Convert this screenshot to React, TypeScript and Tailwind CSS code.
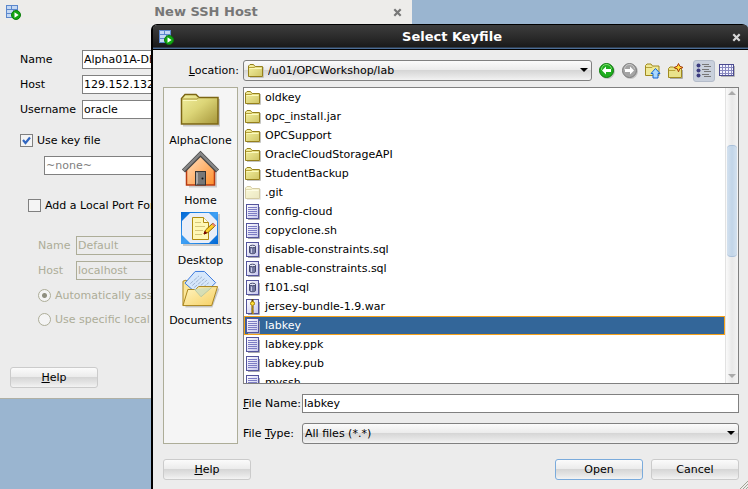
import { useId, type ReactNode } from "react";

type FileKind = "folder" | "hidden" | "doc" | "sql" | "zip";

const files: { name: string; kind: FileKind }[] = [
  { name: "oldkey", kind: "folder" },
  { name: "opc_install.jar", kind: "folder" },
  { name: "OPCSupport", kind: "folder" },
  { name: "OracleCloudStorageAPI", kind: "folder" },
  { name: "StudentBackup", kind: "folder" },
  { name: ".git", kind: "hidden" },
  { name: "config-cloud", kind: "doc" },
  { name: "copyclone.sh", kind: "doc" },
  { name: "disable-constraints.sql", kind: "sql" },
  { name: "enable-constraints.sql", kind: "sql" },
  { name: "f101.sql", kind: "sql" },
  { name: "jersey-bundle-1.9.war", kind: "zip" },
  { name: "labkey", kind: "doc" },
  { name: "labkey.ppk", kind: "doc" },
  { name: "labkey.pub", kind: "doc" },
  { name: "myssh", kind: "doc" },
];

function AppIcon() {
  return (
    <svg width="15" height="15" viewBox="0 0 15 15" className="shrink-0" aria-hidden="true">
      <rect x="0" y="0" width="12" height="13" fill="#5b87cc" />
      <path d="M1 1h4v3H1zM6 1h5v3H6zM1 5h6v3H1zM8 5h3v3H8zM1 9h10v3H1z" fill="#c4d8f3" />
      <circle cx="10" cy="10" r="4.5" fill="#12a512" stroke="#0a7d0a" strokeWidth="1" />
      <path d="M8.5 7.3v5.4L12.6 10z" fill="#fff" />
    </svg>
  );
}

function CloseIcon() {
  return (
    <svg width="9" height="9" viewBox="0 0 9 9" aria-hidden="true">
      <path d="M1.3 1.3l6.4 6.4M7.7 1.3L1.3 7.7" stroke="currentColor" strokeWidth="2.2" />
    </svg>
  );
}

function FolderIcon({ faded = false }: { faded?: boolean }) {
  const id = useId();
  return (
    <svg width="16" height="16" viewBox="0 0 16 16" className="shrink-0" opacity={faded ? 0.4 : 1} aria-hidden="true">
      <linearGradient id={id} x1="0" y1="0" x2="1" y2="1">
        <stop offset="0" stopColor="#f6f3a4" />
        <stop offset="1" stopColor="#cfc565" />
      </linearGradient>
      <path d="M2 14.500h13.500V4" fill="none" stroke="#c4c4c0" />
      <path d="M.5 13.500V3L2 1.500h3.500L7 3.500h7.500v10z" fill={`url(#${id})`} stroke="#96801c" />
      <path d="M1 4.500h5.500l1-1" fill="none" stroke="#b7a23a" />
      <path d="M1.500 5.500h12" stroke="#fbf9bc" />
    </svg>
  );
}

function DocIcon({ kind }: { kind: FileKind }) {
  const id = useId();
  return (
    <svg width="16" height="16" viewBox="0 0 16 16" className="shrink-0" aria-hidden="true">
      <linearGradient id={id} x1="0" y1="0" x2="1" y2="1">
        <stop offset="0" stopColor="#fff" />
        <stop offset="1" stopColor="#c4c4ec" />
      </linearGradient>
      <path d="M3 15.500h11.500V3" fill="none" stroke="#a8a8b0" />
      <rect x="1.500" y=".5" width="12" height="14" fill={`url(#${id})`} stroke="#54549c" />
      {kind === "doc" && <path d="M3 3.500h9M3 5.500h9M3 7.500h9M3 9.500h9M3 11.500h9" stroke="#7c7cc4" />}
      {kind === "sql" && (
        <g>
          <path d="M4.500 4.500v6c0 1.600 6 1.600 6 0v-6" fill="#7478a0" stroke="#44486c" />
          <ellipse cx="7.500" cy="4.500" rx="3" ry="1.300" fill="#e4e6f4" stroke="#44486c" />
          <path d="M6.500 6.500v4.500" stroke="#c8cce4" />
        </g>
      )}
      {kind === "zip" && (
        <g>
          <path d="M7.500 0v3M7.500 7v8" stroke="#5a4510" strokeWidth="2" />
          <path d="M6 8h2M7 10h2M6 12h2M7 14h2" stroke="#e8b820" />
          <circle cx="7.500" cy="4.500" r="2" fill="#ffe23a" stroke="#a67c00" />
        </g>
      )}
    </svg>
  );
}

function BigFolder() {
  return (
    <svg width="40" height="35" viewBox="0 0 40 35" aria-hidden="true">
      <linearGradient id="bigFolder" x1="0" y1="0" x2="1" y2="1">
        <stop offset="0" stopColor="#f2f0a0" />
        <stop offset=".45" stopColor="#dcd577" />
        <stop offset="1" stopColor="#a5953a" />
      </linearGradient>
      <path d="M3 32.500h36V6" fill="none" stroke="#c8c8c8" strokeWidth="2" />
      <path d="M1.500 31V5.500L5 1.500h11l3 3h19V31z" fill="url(#bigFolder)" stroke="#7c6614" strokeWidth="1.500" />
      <path d="M2 6h15l2-1.500" fill="none" stroke="#a9963a" />
      <path d="M3 7.500h14" stroke="#fbf9bc" />
    </svg>
  );
}

function HomeIcon() {
  return (
    <svg width="40" height="38" viewBox="0 0 40 38" aria-hidden="true">
      <linearGradient id="homeWall" x1="0" y1="0" x2="1" y2="1">
        <stop offset="0" stopColor="#ffe2c4" />
        <stop offset="1" stopColor="#ff8e2b" />
      </linearGradient>
      <path d="M8 36.500h27V21" fill="none" stroke="#ccc" strokeWidth="2" />
      <path d="M5.500 35V18.500L19.500 5l14 13.500V35z" fill="url(#homeWall)" stroke="#b83a10" strokeWidth="1.500" />
      <path d="M2.500 21L19.500 4l17 17" fill="none" stroke="#444" strokeWidth="4.500" />
      <path d="M2.500 20.500l17-17 17 17" fill="none" stroke="#858585" strokeWidth="2.500" />
      <rect x="14.500" y="21.500" width="10" height="13.500" fill="#777" stroke="#333" />
      <path d="M17 23v10l-2 2V22z" fill="#aaa" />
      <circle cx="21.500" cy="28.500" r="1" fill="#111" />
    </svg>
  );
}

function DesktopIcon() {
  return (
    <svg width="40" height="36" viewBox="0 0 40 36" aria-hidden="true">
      <linearGradient id="deskBlue" x1="0" y1="0" x2="1" y2="1">
        <stop offset="0" stopColor="#0067d4" />
        <stop offset=".5" stopColor="#3fa0f4" />
        <stop offset="1" stopColor="#0067d4" />
      </linearGradient>
      <path d="M2 33h36V2" fill="none" stroke="#c8c8c8" strokeWidth="2" />
      <rect width="37" height="32" fill="url(#deskBlue)" />
      <path d="M9 1h19l8 8v14l-8 8H9l-8-8V9z" fill="#e9eef8" />
      <path d="M11.500 5.500h11l5 5v17h-16z" fill="#fff8b5" stroke="#b08b10" />
      <path d="M22.500 5.500v5h5" fill="#fffde8" stroke="#b08b10" />
      <path d="M14 10.500h6M14 14.500h10M14 18.500h8M14 22.500h7" stroke="#d6c77c" />
      <path d="M23 22l1.500-4 7.500-7 2.500 2.500-7.500 7z" fill="#ffd028" stroke="#8a6500" />
      <path d="M31.500 11.500l2.500 2.500" stroke="#e08080" strokeWidth="2" />
      <path d="M23 22l1-2.500 1.500 1.500z" fill="#700" stroke="#700" />
    </svg>
  );
}

function DocumentsIcon() {
  return (
    <svg width="40" height="39" viewBox="0 0 40 39" aria-hidden="true">
      <linearGradient id="docFolder" x1="0" y1="0" x2="1" y2="1">
        <stop offset="0" stopColor="#fff6c4" />
        <stop offset="1" stopColor="#f6cf62" />
      </linearGradient>
      <path d="M4 37.500h27l7-18.500" fill="none" stroke="#c8c8c8" strokeWidth="2" />
      <path d="M1.500 36.500V11.500l3-1 3 2 5 3v15z" fill="#fbe69a" stroke="#a88218" />
      <path d="M3.500 13.500L14 1.500h9.500L35 13 20 28z" fill="#d6e7fb" stroke="#3a78dc" />
      <path d="M9 14l9-8M11 16l10-9M13 18l11-9.500M16 19l10-8.500M18 21l10-8" stroke="#9fb4d0" strokeDasharray="4 1" />
      <path d="M1.500 36.500l5-16.500h8l3-3h19.500l-6 19.500z" fill="url(#docFolder)" stroke="#a88218" />
      <path d="M13 19.500l7 8 11-9.500" fill="#c8dcc0" fillOpacity=".7" stroke="#a9bfa0" strokeOpacity=".7" />
    </svg>
  );
}

function ArrowCircle({ back = false }: { back?: boolean }) {
  return (
    <svg width="16" height="16" viewBox="0 0 16 16" aria-hidden="true">
      <circle cx="8.500" cy="8.500" r="7.500" fill="#c4c4c4" />
      <circle cx="7.500" cy="7.500" r="7" fill={back ? "#1fae1f" : "#a4a4a4"} stroke={back ? "#0b7a0b" : "#7c7c7c"} />
      <path d="M2.500 7a5 5 0 0 1 10-1" fill="none" stroke={back ? "#7ddc6d" : "#c8c8c8"} />
      <path
        d={back ? "M3 7.500l4-4v2.500h5v3H7v2.500z" : "M12 7.500l-4-4v2.500H3v3h5v2.500z"}
        fill="#fff"
      />
    </svg>
  );
}

function UpFolderIcon() {
  return (
    <svg width="16" height="16" viewBox="0 0 16 16" aria-hidden="true">
      <path d="M.5 12.500V2.500L2 1h4l1.500 2h6.500v9.500z" fill="#efe998" stroke="#a08a20" />
      <path d="M1 4.500h6l1-1" fill="none" stroke="#b7a23a" />
      <path d="M10.500 5.500l4.500 5h-2v4.500H8v-4.500H6z" fill="#a9d8ff" stroke="#1465d0" />
    </svg>
  );
}

function NewFolderIcon() {
  return (
    <svg width="16" height="16" viewBox="0 0 16 16" aria-hidden="true">
      <path d="M14.500 7v8.500H2" fill="none" stroke="#aaa" />
      <path d="M.5 14.500v-9L2 4h3.500L7 5.500h6.500v9z" fill="#e9e28b" stroke="#a08a20" />
      <path d="M1 7.500h6l1-1" fill="none" stroke="#b7a23a" />
      <path d="M10.500.5l1.300 2.700 3.200 1.300-3.200 1.300-1.300 3-1.300-3L6 4.500l3.200-1.300z" fill="#ffdc38" stroke="#a8380c" />
    </svg>
  );
}

function ListViewIcon() {
  return (
    <svg width="16" height="15" viewBox="0 0 16 15" aria-hidden="true">
      {[2, 7, 12].map((y) => (
        <g key={y}>
          <circle cx="2.500" cy={y + 0.5} r="2" fill="#3c3c80" />
          <path d={`M6 ${y - 0.5}h7M8 ${y + 1.5}h7`} stroke="#777" />
        </g>
      ))}
    </svg>
  );
}

function GridViewIcon() {
  return (
    <svg width="16" height="13" viewBox="0 0 16 13" aria-hidden="true">
      <path d="M2 12.500h13.500V2" fill="none" stroke="#b4b4b4" />
      <rect x=".5" y=".5" width="14" height="11" fill="#f4f4ff" stroke="#4a4a90" />
      <path d="M1 3.500h13M1 6.500h13M1 9.500h13M3.500 1v10M6.500 1v10M9.500 1v10M12.500 1v10" stroke="#8888c0" />
    </svg>
  );
}

const face =
  "bg-[linear-gradient(180deg,#fbfbfb_0%,#ececec_45%,#d6d6d6_50%,#e6e6e6_80%,#f3f3f3_100%)]";

function PushButton({ children, primary = false }: { children: ReactNode; primary?: boolean }) {
  return (
    <button
      type="button"
      className={`h-[21px] w-22 rounded-[3px] border text-center leading-[18px] text-black ${face} ${
        primary ? "border-[#7aabdc]" : "border-[#cbcbcb]"
      }`}
    >
      {children}
    </button>
  );
}

function DownArrow() {
  return (
    <svg width="8" height="4" viewBox="0 0 8 4" className="pointer-events-none absolute top-2 right-1" aria-hidden="true">
      <path d="M0 0h8L4 4z" fill="#000" />
    </svg>
  );
}

function HostField({ id, label, value }: { id: string; label: string; value: string }) {
  return (
    <div className="flex h-[19px] items-center">
      <label htmlFor={id} className="w-[62px]">{label}</label>
      <input id={id} defaultValue={value} className="h-full min-w-0 flex-1 border border-[#808080] bg-white px-px" />
    </div>
  );
}

function ForwardField({ id, label, value }: { id: string; label: string; value: string }) {
  return (
    <div className="flex h-[19px] items-center">
      <label htmlFor={id} className="w-[38px]">{label}</label>
      <input id={id} disabled defaultValue={value} className="h-full min-w-0 flex-1 border border-[#adad98] px-px" />
    </div>
  );
}

const box = "size-[13px] shrink-0 appearance-none border border-[#808080] bg-[#f4f4f4]";
const dot = "size-[13px] shrink-0 appearance-none rounded-full border border-[#adad98] bg-[#f4f4f4]";

function HostWindow() {
  return (
    <section className="absolute top-0 left-0 w-[412px] rounded-tr-md border-b border-[#b0b0a4] bg-[#ececec]">
      <header className="flex h-6 items-center bg-[#edecea] pr-2 pl-1.5 text-[#777]">
        <AppIcon />
        <h1 className="flex-1 text-center font-['DejaVu_Sans'] text-[13px] leading-4 font-bold">New SSH Host</h1>
        <button type="button" aria-label="Close" className="p-0.5"><CloseIcon /></button>
      </header>
      <form className="px-5 pt-[26px] pb-2.5">
        <div className="flex flex-col gap-1.5">
          <HostField id="name" label="Name" value="Alpha01A-DBCS" />
          <HostField id="host" label="Host" value="129.152.132.10" />
          <HostField id="user" label="Username" value="oracle" />
        </div>
        <label className="mt-[15px] flex h-[13px] items-center gap-1">
          <span className="relative flex">
            <input type="checkbox" defaultChecked className={box} />
            <svg width="9" height="9" viewBox="0 0 9 9" className="pointer-events-none absolute top-0.5 left-0.5" aria-hidden="true">
              <path d="M1 4l2.500 3L8 1.500" fill="none" stroke="#3166c0" strokeWidth="2.200" />
            </svg>
          </span>
          Use key file
        </label>
        <input aria-label="Key file" defaultValue="~none~" className="mt-[9px] ml-6 block h-[19px] w-80 border border-[#808080] bg-white px-px text-[#808080]" />
        <label className="mt-6 ml-2 flex h-[13px] items-center gap-1">
          <input type="checkbox" className={box} />
          Add a Local Port Forward
        </label>
        <div className="mt-6 ml-[18px] flex flex-col gap-1.5 text-[#adad98]">
          <ForwardField id="fname" label="Name" value="Default" />
          <ForwardField id="fhost" label="Host" value="localhost" />
        </div>
        <div className="mt-[9px] ml-[18px] flex flex-col gap-[11px] text-[#adad98]">
          <label className="flex h-[13px] items-center gap-1">
            <input type="radio" name="port" disabled defaultChecked className={`${dot} bg-[radial-gradient(circle,#8f8f80_0_2px,#f4f4f4_3px)]`} />
            Automatically assign local port
          </label>
          <label className="flex h-[13px] items-center gap-1">
            <input type="radio" name="port" disabled className={dot} />
            Use specific local port
          </label>
        </div>
        <div className="mt-[41px] -ml-2.5 flex">
          <PushButton><u>H</u>elp</PushButton>
        </div>
      </form>
    </section>
  );
}

const places = [
  { name: "AlphaClone", icon: <BigFolder /> },
  { name: "Home", icon: <HomeIcon /> },
  { name: "Desktop", icon: <DesktopIcon /> },
  { name: "Documents", icon: <DocumentsIcon /> },
];

function FileList() {
  return (
    <div className="flex min-h-0 flex-1 overflow-hidden border border-[#808080] bg-white">
      <ul role="listbox" aria-label="Files" className="min-w-0 flex-1 overflow-hidden">
        {files.map((file) => {
          const selected = file.name === "labkey";
          return (
            <li
              key={file.name}
              role="option"
              aria-selected={selected}
              className={`flex h-[19px] items-center gap-1 border ${
                selected ? "border-[#f5a11a] bg-[#336699] text-white" : "border-transparent"
              }`}
            >
              {file.kind === "folder" || file.kind === "hidden" ? (
                <FolderIcon faded={file.kind === "hidden"} />
              ) : (
                <DocIcon kind={file.kind} />
              )}
              {file.name}
            </li>
          );
        })}
      </ul>
      <div className="flex w-[13px] flex-col items-center border-l border-[#e2e2e2] bg-linear-to-r from-[#fafafa] via-[#e9e9e9] to-[#f4f4f4] py-[3px]">
        <svg width="8" height="4" viewBox="0 0 8 4" aria-hidden="true"><path d="M0 4h8L4 0z" fill="#aaa" /></svg>
        <div className="mt-[50px] h-28 w-2.5 rounded-[4px] border-y border-[#a9c0da] bg-linear-to-r from-[#d3e1ef] via-[#c2d5e8] to-[#d3e1ef]" />
        <svg width="8" height="4" viewBox="0 0 8 4" className="mt-auto mb-0.5" aria-hidden="true"><path d="M0 0h8L4 4z" fill="#aaa" /></svg>
      </div>
    </div>
  );
}

function KeyfileDialog() {
  return (
    <section role="dialog" aria-label="Select Keyfile" className="absolute top-6 right-0 bottom-0 left-[151px] flex flex-col rounded-t-md border-t border-l-2 border-black bg-[#ececec]">
      <header className="flex h-[25px] shrink-0 items-center rounded-t-[4px] border-b border-black bg-[linear-gradient(180deg,#3c3c3c_0,#2b2b2b_50%,#191919_92%,#4b6c94_96%)] pr-[5px] pl-1.5 text-white">
        <AppIcon />
        <h2 className="flex-1 text-center font-['DejaVu_Sans'] text-[13px] leading-4 font-bold">Select Keyfile</h2>
        <button type="button" aria-label="Close" className="p-0.5 text-[#d8d8d8]"><CloseIcon /></button>
      </header>
      <div className="flex min-h-0 flex-1 flex-col pt-2.5 pr-[9px] pb-[9px] pl-2.5">
        <div className="flex h-[21px] shrink-0 items-center">
          <label htmlFor="location" className="w-20 shrink-0 pr-1 text-right"><u>L</u>ocation:</label>
          <div className="relative min-w-0 flex-1">
            <select id="location" className={`block h-[21px] w-full appearance-none rounded-[3px] border border-[#808080] pl-6 ${face}`}>
              <option>/u01/OPCWorkshop/lab</option>
            </select>
            <span className="pointer-events-none absolute top-[3px] left-[5px]"><FolderIcon /></span>
            <DownArrow />
          </div>
          <div className="flex items-center pl-[7px]">
            <div className="flex gap-[7px]">
              <button type="button" aria-label="Back"><ArrowCircle back /></button>
              <button type="button" aria-label="Forward"><ArrowCircle /></button>
              <button type="button" aria-label="Up one level"><UpFolderIcon /></button>
              <button type="button" aria-label="New folder"><NewFolderIcon /></button>
            </div>
            <button type="button" aria-label="List view" className="ml-[9px] flex size-[22px] items-center justify-center rounded-[3px] border border-[#b4bcca] bg-[#c9d0dc]"><ListViewIcon /></button>
            <button type="button" aria-label="Detail view" className="mr-1 ml-1"><GridViewIcon /></button>
          </div>
        </div>
        <div className="mt-1.5 flex min-h-0 flex-1 gap-[5px]">
          <nav className="flex w-[75px] shrink-0 flex-col items-center border border-[#adad98] bg-[#f5f5f5] pt-0.5">
            {places.map((place) => (
              <button key={place.name} type="button" className="flex h-15 flex-col items-center justify-end">
                {place.icon}
                <span className="mt-1 leading-[18px]">{place.name}</span>
              </button>
            ))}
          </nav>
          <div className="flex min-w-0 flex-1 flex-col">
            <FileList />
            <div className="mt-2.5 flex h-[19px] shrink-0 items-center">
              <label htmlFor="filename" className="w-[59px] shrink-0 whitespace-nowrap"><u>F</u>ile Name:</label>
              <input id="filename" defaultValue="labkey" className="h-full min-w-0 flex-1 border border-[#808080] bg-white px-px" />
            </div>
            <div className="mt-2.5 flex h-[21px] shrink-0 items-center">
              <label htmlFor="filetype" className="w-[59px] shrink-0 whitespace-nowrap">File <u>T</u>ype:</label>
              <div className="relative min-w-0 flex-1">
                <select id="filetype" className={`block h-[21px] w-full appearance-none rounded-[3px] border border-[#808080] pl-0.5 ${face}`}>
                  <option>All files (*.*)</option>
                </select>
                <DownArrow />
              </div>
            </div>
          </div>
        </div>
        <div className="mt-[15px] flex shrink-0 gap-2">
          <PushButton><u>H</u>elp</PushButton>
          <span className="flex-1" />
          <PushButton primary>Open</PushButton>
          <PushButton>Cancel</PushButton>
        </div>
      </div>
      <svg width="8" height="8" viewBox="0 0 8 8" className="absolute right-0 bottom-0" aria-hidden="true">
        <path d="M0 8l8-8M3 8l5-5M6 8l2-2" stroke="#a4a494" />
      </svg>
    </section>
  );
}

export default function App() {
  return (
    <main className="relative h-screen min-h-[480px] overflow-hidden bg-[#9ab5d0] font-['DejaVu_Sans',sans-serif] text-[11px] leading-[14px] text-black">
      <HostWindow />
      <KeyfileDialog />
    </main>
  );
}
